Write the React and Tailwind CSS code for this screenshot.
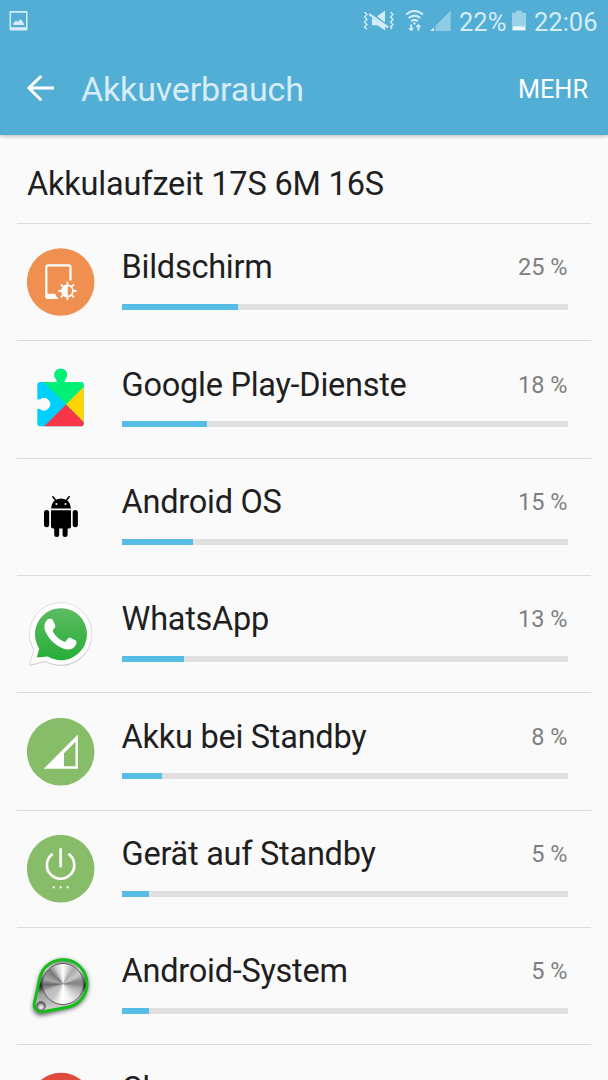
import React from "react";

function ScreenIcon() {
  const rays = [0, 45, 90, 135, 180, 225, 270, 315];
  return (
    <svg viewBox="0 0 68 68" className="block size-[68px]">
      <circle cx="33.7" cy="34" r="33.8" fill="#ef9051" />
      <path d="M43.5 32.500V19.200q0-1.900-1.900-1.900H21.200q-1.900 0-1.900 1.900V48q0 1.900 1.900 1.900h9" fill="none" stroke="#fff" strokeWidth="2.200" />
      <path d="M18.700 45.700h9.600q.6 3.200 3.400 5.200H20.700q-2 0-2-2z" fill="#fff" />
      <circle cx="40.400" cy="42.900" r="5.600" fill="none" stroke="#fff" strokeWidth="1.700" />
      <path d="M40.700 37.400a5.500 5.500 0 0 0 0 11z" fill="#fff" />
      {rays.map((r) => (
        <path key={r} d="M40.400 33.700v3.500" stroke="#fff" strokeWidth="1.800" transform={`rotate(${r} 40.4 42.900)`} />
      ))}
    </svg>
  );
}

function PlayServicesIcon() {
  return (
    <svg viewBox="0 0 68 68" className="block size-[68px]">
      <defs>
        <clipPath id="piece">
          <path d="M13.300 16.700H29.500q.9-1.300-.6-3a6.400 6.400 0 1 1 9.600 0q-1.500 1.700-.6 3H53.700q3 0 3 3V58q0 3-3 3H13.300q-3 0-3-3V44.800q0-1.400 1.400-1.400.9 0 1.900.6a6.200 6.200 0 1 0 0-10.400q-1 .6-1.900.6-1.400 0-1.400-1.400V19.700q0-3 3-3z" />
        </clipPath>
      </defs>
      <g transform="translate(0 -.6)">
        <g clipPath="url(#piece)">
          <path d="M0 0H68V68H0z" fill="#00d0ff" />
          <path d="M0 0H68V10L39 39 0 0z" fill="#02f076" />
          <path d="M68 10V68L39 39z" fill="#ffd400" />
          <path d="M39 39 8.800 69.200H69.200z" fill="#f83548" />
        </g>
      </g>
    </svg>
  );
}

function AndroidIcon() {
  return (
    <svg viewBox="0 0 68 68" className="block size-[68px]">
      <path d="M24 25.400a10 10 0 0 1 20 0z" fill="#000" />
      <path d="M25.900 13.700l3 4M42.100 13.700l-3 4" stroke="#000" strokeWidth="1.500" strokeLinecap="round" />
      <circle cx="29.400" cy="21.100" r="1" fill="#fff" />
      <circle cx="38.500" cy="21.100" r="1" fill="#fff" />
      <path d="M24 27.300h20v16.200q0 2-2 2H26q-2 0-2-2z" fill="#000" />
      <rect x="17" y="27" width="5.200" height="17.200" rx="2.600" fill="#000" />
      <rect x="45.700" y="27" width="5.200" height="17.200" rx="2.600" fill="#000" />
      <rect x="27.200" y="38" width="5" height="16" rx="2.500" fill="#000" />
      <rect x="35.600" y="38" width="5" height="16" rx="2.500" fill="#000" />
    </svg>
  );
}

function WhatsAppIcon() {
  return (
    <svg viewBox="0 0 68 68" className="block size-[68px] overflow-visible">
      <defs>
        <linearGradient id="wa" x1="0" y1="0" x2="0" y2="1">
          <stop offset="0" stopColor="#5dbb63" />
          <stop offset="1" stopColor="#27ae38" />
        </linearGradient>
      </defs>
      <g transform="translate(-.5 0)">
        <path d="M2.900 65.200 7.300 49.600A31.200 31.200 0 1 1 19.200 61.200z" fill="#a5a5a5" opacity=".6" transform="translate(0 .8)" />
        <path d="M2.900 65.200 7.300 49.600A31.200 31.200 0 1 1 19.200 61.200z" fill="#fff" stroke="#d2d2d2" strokeWidth=".7" />
        <path d="M10.300 57.600 12.700 48.400A26 26 0 1 1 21.300 56.600z" fill="url(#wa)" />
        <path d="M21.300 19.300q1-.8 3.500-.5 1.100.1 1.700 1.500l2.200 5.300q.4 1-.3 2l-1.900 2.500q-.7.900 0 2 4 6.500 10.700 9.500 1.200.5 2-.4l2.400-3q.8-1 2-.5l5.300 2.600q1.200.6 1.100 1.700-.3 4.500-4.200 6.400-4 2-9.300 0Q25 44.100 19.300 32.600q-3.800-8.300 2-13.300z" fill="#fff" />
      </g>
    </svg>
  );
}

function CellStandbyIcon() {
  return (
    <svg viewBox="0 0 68 68" className="block size-[68px]">
      <circle cx="33.700" cy="33.700" r="33.800" fill="#87bd69" />
      <path fillRule="evenodd" d="M16.700 50.800H50.900V16.600zM37 48.200V35.200L48.500 23.700V48.200z" fill="#fff" />
    </svg>
  );
}

function DeviceStandbyIcon() {
  return (
    <svg viewBox="0 0 68 68" className="block size-[68px]">
      <circle cx="33.700" cy="33.700" r="33.800" fill="#87bd69" />
      <path d="M25.700 18.900a13.700 13.700 0 1 0 15.800 0M33.600 13.200v19" fill="none" stroke="#fff" strokeWidth="2.600" />
      <path d="M25.700 51.200h2v2h-2zM32.700 51.200h2v2h-2zM39.700 51.200h2v2h-2z" fill="#fff" />
    </svg>
  );
}

function SystemIcon() {
  return (
    <div className="relative size-[68px]">
      <svg viewBox="0 0 68 68" className="block size-[68px] overflow-visible">
        <defs>
          <filter id="soft" x="-20%" y="-20%" width="140%" height="140%">
            <feGaussianBlur stdDeviation="1.900" />
          </filter>
          <linearGradient id="plate" x1="0" y1="0" x2="0" y2="1">
            <stop offset="0" stopColor="#8b8b8b" />
            <stop offset=".2" stopColor="#d0d0d0" />
            <stop offset=".5" stopColor="#222" />
            <stop offset=".65" stopColor="#999" />
            <stop offset="1" stopColor="#ddd" />
          </linearGradient>
        </defs>
        <path d="M7 52.300 12.600 25.900A24.300 24.300 0 1 1 41 55.200L16 61A7.300 7.300 0 0 1 7 52.300z" fill="#222" stroke="#222" strokeWidth="2" opacity=".65" filter="url(#soft)" transform="translate(0 1.500)" />
        <path d="M7.200 52.300 12.800 25.500A24 24 0 1 1 41.500 55L16 59.700A7.300 7.300 0 0 1 7.200 52.300z" fill="url(#plate)" stroke="#10c018" strokeWidth="2.900" />
      </svg>
      <div className="absolute left-[15.200px] top-[10.900px] size-[42px] rounded-full border-[1.500px] border-[#606060] bg-[conic-gradient(#fff_0deg,#aaa_35deg,#c9c9c9_60deg,#888_80deg,#858585_90deg,#aaa_105deg,#c9c9c9_125deg,#f5f5f5_160deg,#fff_185deg,#c5c5c5_215deg,#bbb_245deg,#666_268deg,#aaa_285deg,#777_315deg,#c5c5c5_335deg,#fff_360deg)]" />
      <div className="absolute left-[9px] top-[48.500px] size-[10px] rounded-full border border-[#666] bg-[radial-gradient(circle_at_50%_65%,#fff,#bbb_35%,#555_75%)]" />
    </div>
  );
}

function ChromeIcon() {
  return (
    <svg viewBox="0 0 68 68" className="block size-[68px]">
      <circle cx="34" cy="34.700" r="32" fill="#e04a3c" />
      <circle cx="34" cy="34.700" r="15" fill="#4285f4" stroke="#fff" strokeWidth="3" />
    </svg>
  );
}

const rows = [
  { name: "Bildschirm", pct: 25, bar: 116, Icon: ScreenIcon },
  { name: "Google Play-Dienste", pct: 18, bar: 85, Icon: PlayServicesIcon },
  { name: "Android OS", pct: 15, bar: 71.5, Icon: AndroidIcon },
  { name: "WhatsApp", pct: 13, bar: 62.5, Icon: WhatsAppIcon },
  { name: "Akku bei Standby", pct: 8, bar: 40.5, Icon: CellStandbyIcon },
  { name: "Gerät auf Standby", pct: 5, bar: 27, Icon: DeviceStandbyIcon },
  { name: "Android-System", pct: 5, bar: 27, Icon: SystemIcon },
  { name: "Chrome", pct: 3, bar: 18, Icon: ChromeIcon },
];

function StatusBar() {
  return (
    <div className="flex h-[45px] items-start pt-[10px] text-[#d6edf7]">
      <svg viewBox="0 0 20 21" className="ml-[9px] h-[21px] w-5">
        <path fillRule="evenodd" fill="currentColor" d="M1.500 1h16q1 0 1 1v17.500q0 1-1 1h-16q-1 0-1-1V2q0-1 1-1zM2 2.700v14.500h15V2.700z" />
        <path fill="currentColor" d="M4 15v-1.500l3-3 2 1.500 2.500-3 1.700 2 1.300 2 .5 2z" />
      </svg>
      <svg viewBox="0 0 32 22" className="ml-[334px] h-[22px] w-8">
        <path d="M1.500 2l2.500 2.500L1.500 7 4 9.500 1.500 12 4 14.500 1.500 17 4 19.500M27.500 2l2.500 2.500L27.500 7l2.500 2.500-2.500 2.500 2.500 2.500-2.500 2.500 1.500 2" fill="none" stroke="currentColor" strokeWidth="1.300" />
        <path d="M14 6.200 22 .7v11.800zM9 7.700 22 16v4.500l-7.500-5.300H9z" fill="currentColor" />
        <path d="M6.200 4.200 25 17.300" stroke="currentColor" strokeWidth="2.200" />
      </svg>
      <svg viewBox="0 0 20 22" className="ml-[10px] h-[22px] w-5">
        <path d="M1 4.500q8.500-7.200 17 0M3.700 8q5.800-4.700 11.600 0M6.200 11.200q3.300-2.600 6.600 0" fill="none" stroke="currentColor" strokeWidth="2" />
        <circle cx="9.500" cy="13.400" r="1.200" fill="currentColor" />
        <path d="M5.200 14.500h2v3.700h2L6.200 21.200 3.200 18.200h2zM12.400 20.500v-3.600h-2l3-3 3 3h-2v3.600z" fill="currentColor" />
      </svg>
      <svg viewBox="0 0 22 22" className="ml-[5px] h-[22px] w-[22px]">
        <path d="M20.700.5V21H5.500v-5.300z" fill="#8fcce5" />
        <path d="M.2 21 4 17.200V21z" fill="currentColor" />
      </svg>
      <span className="-mt-px ml-[7px] w-[53px] whitespace-nowrap text-[25.500px] leading-[26px]">22%</span>
      <svg viewBox="0 0 14 21" className="h-[21px] w-[14px]">
        <path d="M4 .7h6v2h3q1 0 1 1V20.800H0V3.700q0-1 1-1h3z" fill="#9cd2e8" />
        <path d="M1 16.500h12v3.500H1z" fill="#eff8fc" />
      </svg>
      <span className="-mt-px ml-[8px] whitespace-nowrap text-[25.500px] leading-[26px]">22:06</span>
    </div>
  );
}

export default function App() {
  return (
    <div className="flex h-[1080px] w-[608px] flex-col overflow-hidden bg-[#fafafa] font-['Roboto','Liberation_Sans',sans-serif] text-[#1f1f1f]">
      <header className="h-[135px] shrink-0 bg-[#52aed5] shadow-[0_1px_4px_rgba(0,0,0,0.28)]">
        <StatusBar />
        <div className="flex h-[88px] items-center pr-[20px]">
          <svg viewBox="0 0 28 28" className="ml-[27px] h-7 w-7">
            <path d="M14.300 1 1.800 13 14.300 25.300M1.500 13H27" fill="none" stroke="#fff" strokeWidth="3" />
          </svg>
          <h1 className="ml-[26px] flex-1 whitespace-nowrap text-[34px] leading-[40px] tracking-[-0.160px] text-[#d6edf7]">Akkuverbrauch</h1>
          <button className="pt-px text-[25.300px] leading-[30px] text-white">MEHR</button>
        </div>
      </header>
      <main className="flex flex-col px-[17px]">
        <h2 className="h-[88px] shrink-0 pl-[10px] pt-[29px] text-[32.500px] leading-[40px] tracking-[-0.180px]">Akkulaufzeit 17S 6M 16S</h2>
        {rows.map(({ name, pct, bar, Icon }) => (
          <section key={name} className="flex h-[117.330px] shrink-0 border-t border-[#dcdcdc] pl-[10px] pr-[23.500px] pt-[24.300px]">
            <Icon />
            <div className="ml-[26.600px] flex-1">
              <div className="mt-[-1px] flex h-[56.700px] items-start justify-between whitespace-nowrap">
                <span className="text-[32.500px] leading-[40px] tracking-[-0.260px]">{name}</span>
                <span className="text-[23.500px] leading-[40px] text-[#808080]">{pct} %</span>
              </div>
              <div className="h-[6px] bg-[#e0e0e0]">
                <div className="h-full bg-[#56bde4]" style={{ width: bar }} />
              </div>
            </div>
          </section>
        ))}
      </main>
    </div>
  );
}
